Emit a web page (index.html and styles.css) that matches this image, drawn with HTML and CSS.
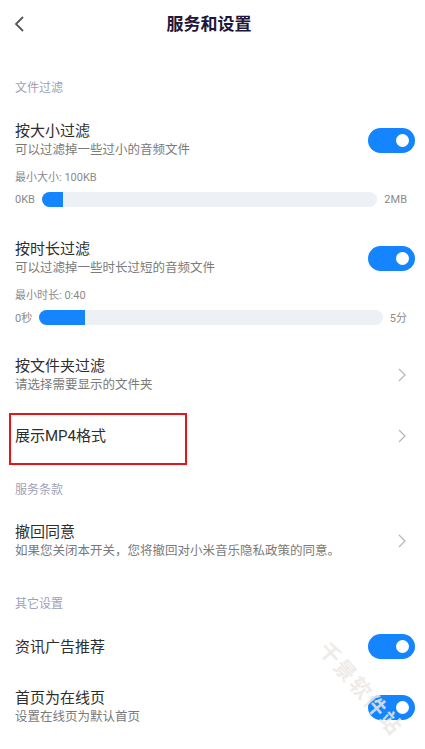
FILE: index.html
```html
<!doctype html>
<html>

<head>
    <meta charset="utf-8">
    <meta name="viewport" content="width=device-width, initial-scale=1">
    <title>服务和设置</title>
    <link rel="stylesheet" href="styles.css">
</head>

<body>
    <div class="page">
        <!-- top bar -->
        <header class="topbar">
            <span class="back">
                <svg width="10" height="16" viewBox="0 0 10 16"><polyline points="9,1 2,8 9,15" fill="none" stroke="#555" stroke-width="1.8"/></svg>
            </span>
            <h1 class="title">服务和设置</h1>
            <span></span>
        </header>

        <!-- 文件过滤 -->
        <div class="section-label first">文件过滤</div>

        <div class="item gap-25">
            <div class="text">
                <div class="name">按大小过滤</div>
                <div class="desc">可以过滤掉一些过小的音频文件</div>
            </div>
            <span class="switch"></span>
        </div>
        <div class="range">
            <div class="range-label">最小大小: 100KB</div>
            <div class="range-row">
                <span>0KB</span>
                <div class="track"><div class="fill" style="width: 21px"></div></div>
                <span>2MB</span>
            </div>
        </div>

        <div class="item gap-32">
            <div class="text">
                <div class="name">按时长过滤</div>
                <div class="desc">可以过滤掉一些时长过短的音频文件</div>
            </div>
            <span class="switch"></span>
        </div>
        <div class="range">
            <div class="range-label">最小时长: 0:40</div>
            <div class="range-row">
                <span>0秒</span>
                <div class="track"><div class="fill" style="width: 46px"></div></div>
                <span>5分</span>
            </div>
        </div>

        <div class="item gap-31">
            <div class="text">
                <div class="name">按文件夹过滤</div>
                <div class="desc">请选择需要显示的文件夹</div>
            </div>
            <svg class="chevron" width="8" height="14" viewBox="0 0 8 14"><polyline points="1,1 7,7 1,13" fill="none" stroke="#b5b5b5" stroke-width="1.2"/></svg>
        </div>

        <div class="item item-top gap-19">
            <div class="highlight">
                <div class="name">展示MP4格式</div>
            </div>
            <svg class="chevron chevron-top" width="8" height="14" viewBox="0 0 8 14"><polyline points="1,1 7,7 1,13" fill="none" stroke="#b5b5b5" stroke-width="1.2"/></svg>
        </div>

        <!-- 服务条款 -->
        <div class="section-label gap-17">服务条款</div>

        <div class="item gap-24">
            <div class="text">
                <div class="name">撤回同意</div>
                <div class="desc">如果您关闭本开关，您将撤回对小米音乐隐私政策的同意。</div>
            </div>
            <svg class="chevron" width="8" height="14" viewBox="0 0 8 14"><polyline points="1,1 7,7 1,13" fill="none" stroke="#b5b5b5" stroke-width="1.2"/></svg>
        </div>

        <!-- 其它设置 -->
        <div class="section-label gap-36">其它设置</div>

        <div class="item gap-22">
            <div class="text">
                <div class="name">资讯广告推荐</div>
            </div>
            <span class="switch"></span>
        </div>

        <div class="item gap-29">
            <div class="text">
                <div class="name">首页为在线页</div>
                <div class="desc">设置在线页为默认首页</div>
            </div>
            <span class="switch"></span>
        </div>

        <div class="watermark">千景软件站</div>
    </div>
</body>

</html>
```

FILE: styles.css
```css
/* page */

html,
body {
    margin: 0;
    padding: 0;
    background: #fff;
}

body {
    height: 749px;
    overflow: hidden;
    font-family: Roboto, "Noto Sans CJK SC", sans-serif;
}

.page {
    position: relative;
    width: 425px;
}

/* top bar */

.topbar {
    display: grid;
    grid-template-columns: 40px 1fr 40px;
    align-items: center;
    height: 47px;
    padding: 0 14px 0 7px;
}

.back {
    display: flex;
    align-items: center;
    padding-left: 7px;
}

.title {
    margin: 0;
    text-align: center;
    font-size: 17px;
    font-weight: 700;
    line-height: 24px;
    color: #20163a;
}

/* section labels */

.section-label {
    padding: 0 15px;
    font-size: 12px;
    line-height: 16px;
    color: #9ea2b8;
}

.section-label.first {
    margin-top: 33px;
}

/* rows */

.item {
    display: flex;
    align-items: center;
    justify-content: space-between;
    padding: 0 10px 0 15px;
}

.item-top {
    align-items: flex-start;
}

.name {
    font-size: 15px;
    line-height: 20px;
    color: #2e2e2e;
}

.desc {
    font-size: 12.5px;
    line-height: 18px;
    color: #7a7a7a;
}

.switch {
    position: relative;
    flex: none;
    width: 47px;
    height: 25px;
    border-radius: 13px;
    background: #1585ff;
}

.switch::after {
    content: "";
    position: absolute;
    right: 6px;
    top: 6px;
    width: 13px;
    height: 13px;
    border-radius: 50%;
    background: #fff;
}

.chevron {
    flex: none;
    margin-right: 9px;
}

.chevron-top {
    margin-top: 16px;
}

.highlight {
    box-sizing: border-box;
    width: 178px;
    height: 52px;
    margin-left: -6px;
    padding: 11px 0 0 4px;
    border: 2px solid #e8121b;
}

/* range sliders */

.range {
    padding: 0 18px 0 15px;
}

.range-label {
    margin-top: 11px;
    font-size: 11px;
    line-height: 16px;
    color: #8a8a8a;
}

.range-row {
    display: flex;
    align-items: center;
    gap: 7px;
    height: 16px;
    margin-top: 5px;
    font-size: 11px;
    color: #8a8a8a;
}

.track {
    flex: 1;
    height: 15px;
    border-radius: 8px;
    background: #edf0f5;
    overflow: hidden;
}

.fill {
    height: 100%;
    background: #1585ff;
}

/* spacing */

.gap-17 { margin-top: 17px; }
.gap-19 { margin-top: 19px; }
.gap-22 { margin-top: 22px; }
.gap-24 { margin-top: 24px; }
.gap-25 { margin-top: 25px; }
.gap-29 { margin-top: 29px; }
.gap-31 { margin-top: 31px; }
.gap-32 { margin-top: 32px; }
.gap-36 { margin-top: 36px; }

/* watermark */

.watermark {
    position: absolute;
    left: 303px;
    top: 675px;
    width: 115px;
    text-align: center;
    font-size: 21px;
    font-weight: 700;
    line-height: 28px;
    letter-spacing: 2px;
    color: rgba(236, 232, 228, 0.85);
    transform: rotate(49deg);
    white-space: nowrap;
}
```
